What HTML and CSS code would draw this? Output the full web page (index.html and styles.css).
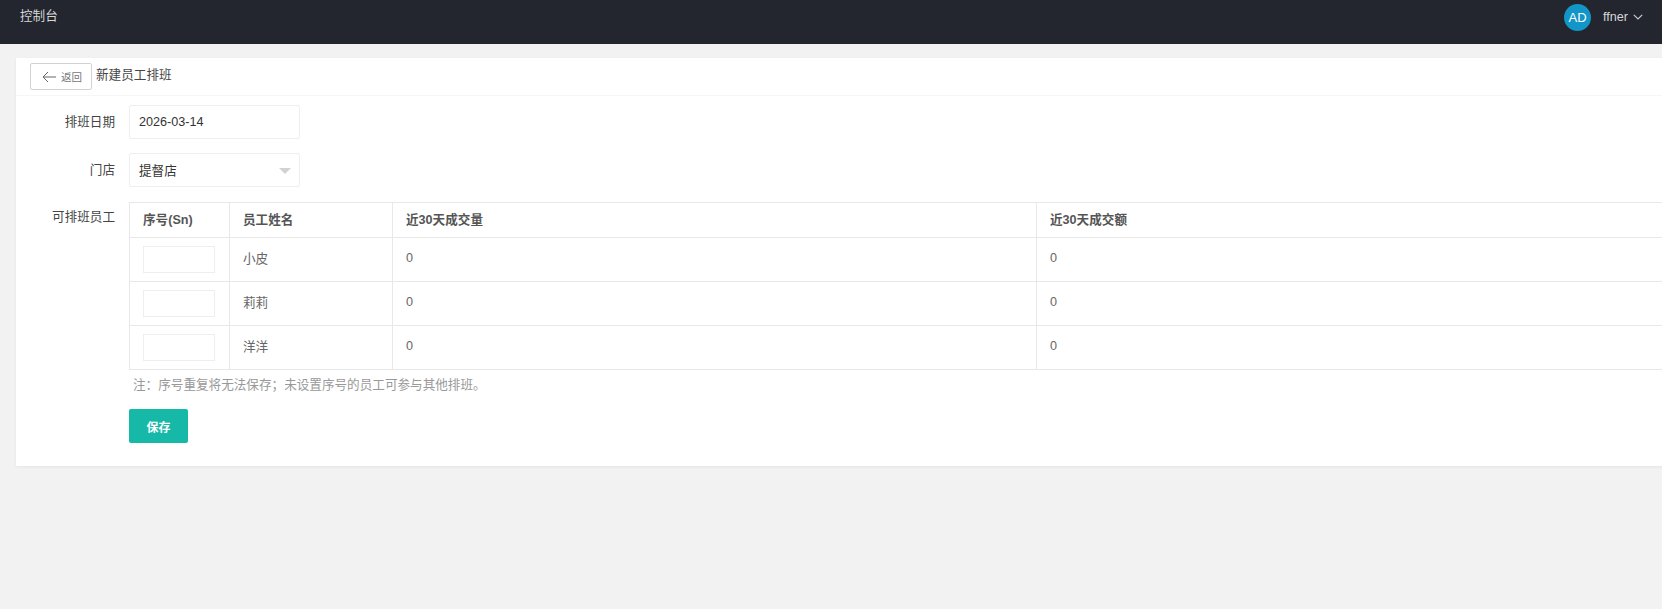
FILE: index.html
```html
<!DOCTYPE html>
<html lang="zh-CN">
<head>
<meta charset="utf-8">
<title>新建员工排班</title>
<link rel="stylesheet" href="styles.css">
</head>
<body>
<header class="topbar">
  <div class="brand">控制台</div>
  <div class="user">
    <span class="avatar">AD</span>
    <span class="user-name">ffner</span>
    <svg class="chevron" width="10" height="6" viewBox="0 0 10 6"><path d="M0.8 0.8 L5 5 L9.2 0.8" fill="none" stroke="#c8cacd" stroke-width="1.2"/></svg>
  </div>
</header>
<main class="main">
  <section class="card">
    <div class="card-head">
      <button class="back" type="button">
        <svg class="back-icon" width="14" height="12" viewBox="0 0 14 12"><path d="M6 1 L1 6 L6 11 M1 6 H14" fill="none" stroke="#666" stroke-width="1"/></svg>
        <span>返回</span>
      </button>
      <span class="card-title">新建员工排班</span>
    </div>
    <form class="form">
      <div class="row row-date">
        <label class="label">排班日期</label>
        <div class="field">2026-03-14</div>
      </div>
      <div class="row row-store">
        <label class="label">门店</label>
        <div class="field field-select">提督店<i class="caret"></i></div>
      </div>
      <div class="row row-table">
        <label class="label">可排班员工</label>
        <div class="block">
          <table class="table">
            <thead>
              <tr><th class="c1">序号(Sn)</th><th class="c2">员工姓名</th><th class="c3">近30天成交量</th><th class="c4">近30天成交额</th></tr>
            </thead>
            <tbody>
              <tr><td><input class="sn" type="text"></td><td>小皮</td><td>0</td><td>0</td></tr>
              <tr><td><input class="sn" type="text"></td><td>莉莉</td><td>0</td><td>0</td></tr>
              <tr><td><input class="sn" type="text"></td><td>洋洋</td><td>0</td><td>0</td></tr>
            </tbody>
          </table>
          <p class="note">注：序号重复将无法保存；未设置序号的员工可参与其他排班。</p>
          <button class="save" type="button">保存</button>
        </div>
      </div>
    </form>
  </section>
</main>
</body>
</html>
```

FILE: styles.css
```css
* { box-sizing: border-box; }
html, body { margin: 0; height: 100%; overflow: hidden; }
body {
  background: #f2f2f2;
  color: #333;
  font-family: "Liberation Sans", "Noto Sans CJK SC", sans-serif;
  font-size: 12.6px;
}
.topbar {
  height: 44px;
  background: #23262e;
  display: flex;
  justify-content: space-between;
  align-items: flex-start;
  padding: 0 19px 0 20px;
  color: #d6d7d9;
}
.brand { line-height: 32px; }
.user { display: flex; align-items: center; height: 34px; }
.avatar {
  width: 27px;
  height: 27px;
  border-radius: 50%;
  background: #1296c8;
  color: #fff;
  font-size: 13px;
  line-height: 27px;
  text-align: center;
}
.user-name { margin-left: 12px; font-size: 12.6px; }
.chevron { margin-left: 5px; }
.main { padding: 14px 0 0 16px; }
.card {
  width: 1720px;
  height: 408px;
  background: #fff;
  box-shadow: 0 1px 3px rgba(0, 0, 0, 0.06);
}
.card-head {
  height: 38px;
  border-bottom: 1px solid #f6f6f6;
  display: flex;
  align-items: flex-start;
  padding: 5px 0 0 14px;
}
.back {
  width: 62px;
  height: 27px;
  padding: 0 0 0 11px;
  background: #fff;
  border: 1px solid #d2d2d2;
  border-radius: 2px;
  display: flex;
  align-items: center;
  color: #777;
  font: inherit;
  font-size: 10.5px;
}
.back-icon { margin-right: 5px; }
.card-title { margin-left: 4px; line-height: 25px; color: #444; }
.form { padding-top: 9px; }
.row { display: flex; align-items: flex-start; }
.row-store { margin-top: 14px; }
.row-table { margin-top: 15px; }
.label {
  width: 99px;
  height: 34px;
  text-align: right;
  margin-right: 14px;
  line-height: 34px;
  color: #444;
}
.row-store .label { line-height: 35px; }
.row-table .label { line-height: 31px; }
.field {
  width: 171px;
  height: 34px;
  border: 1px solid #eee;
  border-radius: 2px;
  padding-left: 9px;
  line-height: 33px;
  color: #333;
  position: relative;
}
.field-select { line-height: 34px; }
.caret {
  position: absolute;
  right: 8px;
  top: 14px;
  border-style: solid;
  border-width: 6px 6px 0;
  border-color: #d2d2d2 transparent transparent;
}
.block { flex: none; }
.table {
  border-collapse: collapse;
  table-layout: fixed;
  width: 1552px;
  color: #666;
}
.table th, .table td {
  border: 1px solid #e8e8e8;
  padding: 0 13px 4px;
  text-align: left;
}
.table th { height: 35px; font-weight: 700; color: #555; }
.table td { height: 44px; }
.c1 { width: 100px; }
.c2 { width: 163px; }
.c3 { width: 644px; }
.c4 { width: 645px; }
.sn {
  display: block;
  width: 72px;
  height: 27px;
  margin-top: 4px;
  border: 1px solid #eee;
  padding: 0;
  background: #fff;
}
.note {
  margin: 6px 0 0;
  padding-left: 4px;
  line-height: 18px;
  color: #999;
}
.save {
  display: block;
  margin-top: 15px;
  width: 59px;
  height: 34px;
  border: 0;
  border-radius: 2px;
  background: #16b9a8;
  color: #fff;
  font: inherit;
  font-weight: 700;
  font-size: 12px;
  padding: 0;
}
```
